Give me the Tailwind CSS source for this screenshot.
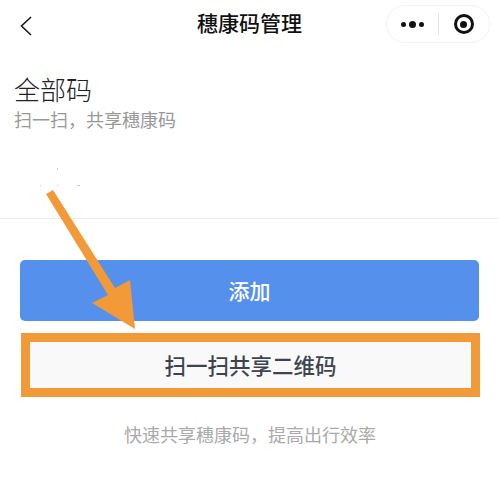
<!DOCTYPE html>
<html lang="zh-CN">
<head>
    <meta charset="UTF-8">
    <meta name="viewport" content="width=device-width, initial-scale=1.0">
    <title>穗康码管理</title>
    <script src="https://cdn.jsdelivr.net/npm/@tailwindcss/browser@4"></script>
</head>
<body class="bg-white font-['Noto_Sans_CJK_SC','Liberation_Sans',sans-serif]">
    <div class="relative w-[499px] h-[496px] overflow-hidden">
        <!-- Navigation -->
        <nav class="flex items-center justify-between h-[48px] pl-[20px] pr-[9px]">
            <svg class="w-[12px] h-[20px] mt-[3px]" viewBox="0 0 12 20" fill="none" stroke="#1a1a1a" stroke-width="1.6">
                <path d="M11 1 L1.5 10 L11 19"/>
            </svg>
            <div class="flex items-center h-[38px] w-[104px] rounded-full border border-[#f3f3f3]">
                <div class="flex-1 flex items-center justify-center gap-[3px]">
                    <span class="w-[5px] h-[5px] rounded-full bg-[#111]"></span>
                    <span class="w-[7px] h-[7px] rounded-full bg-[#111]"></span>
                    <span class="w-[5px] h-[5px] rounded-full bg-[#111]"></span>
                </div>
                <div class="w-px h-[22px] bg-[#e6e6e6]"></div>
                <div class="flex-1 flex items-center justify-center">
                    <div class="flex items-center justify-center w-[20px] h-[20px] rounded-full border-[3px] border-[#111]">
                        <span class="w-[7px] h-[7px] rounded-full bg-[#111]"></span>
                    </div>
                </div>
            </div>
        </nav>
        <h1 class="absolute top-[7px] left-0 w-full text-center text-[21px] leading-[30px] font-medium text-[#111]">穗康码管理</h1>

        <!-- Header section -->
        <section class="h-[171px] border-b border-[#ececec] pl-[14px] pt-[25px]">
            <h2 class="text-[26px] leading-[32px] font-light text-[#222]">全部码</h2>
            <p class="mt-[2px] text-[18px] leading-[24px] text-[#999]">扫一扫，共享穗康码</p>
        </section>

        <!-- Buttons -->
        <section class="flex flex-col pl-[20px] pr-[19px] pt-[41px]">
            <button class="h-[61px] w-[459px] rounded-[5px] bg-[#5590ec] text-white text-[21px] font-medium">添加</button>
            <button class="mt-[12px] ml-[1px] h-[64px] w-[459px] border-[9px] border-[#f19a37] bg-[#f9f9f9] text-[#3e4350] text-[21.5px] font-medium">扫一扫共享二维码</button>
            <p class="mt-[24px] text-center text-[18px] leading-[26px] text-[#aaaaaa]">快速共享穗康码，提高出行效率</p>
        </section>

        <!-- Annotation arrow and leftover specks -->
        <svg class="absolute top-0 left-0" width="499" height="496" viewBox="0 0 499 496">
            <g fill="#c9c9c9">
                <rect x="57" y="168" width="1" height="2"/>
                <rect x="40" y="185" width="1" height="1"/>
                <rect x="57" y="185" width="1" height="1"/>
                <rect x="77" y="185" width="3" height="1"/>
            </g>
            <polygon fill="#f19a37" points="46,194 53,190 115,288 130,280 135,329 92,303 108,295"/>
        </svg>
    </div>
</body>
</html>
